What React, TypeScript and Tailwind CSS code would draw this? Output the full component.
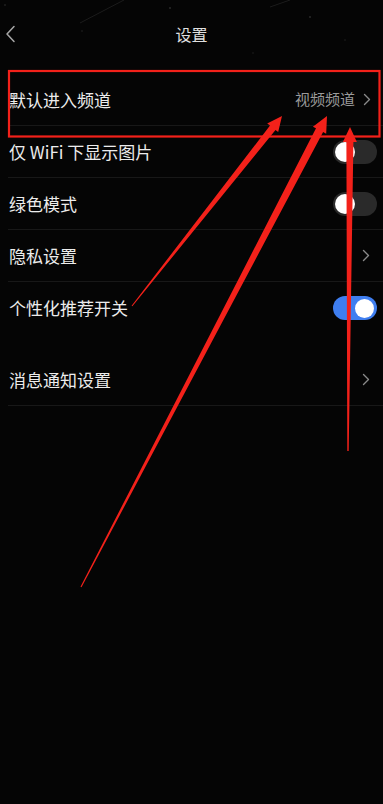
import React from "react";

type Pt = [number, number];

function arrowPoints(tail: Pt, tip: Pt, tw: number, nw: number, hl: number, hw: number): string {
  const dx = tip[0] - tail[0];
  const dy = tip[1] - tail[1];
  const len = Math.hypot(dx, dy);
  const ux = dx / len;
  const uy = dy / len;
  const nx = -uy;
  const ny = ux;
  const neck: Pt = [tip[0] - ux * hl, tip[1] - uy * hl];
  const pts: Pt[] = [
    [tail[0] + (nx * tw) / 2, tail[1] + (ny * tw) / 2],
    [neck[0] + (nx * nw) / 2, neck[1] + (ny * nw) / 2],
    [neck[0] + (nx * hw) / 2, neck[1] + (ny * hw) / 2],
    tip,
    [neck[0] - (nx * hw) / 2, neck[1] - (ny * hw) / 2],
    [neck[0] - (nx * nw) / 2, neck[1] - (ny * nw) / 2],
    [tail[0] - (nx * tw) / 2, tail[1] - (ny * tw) / 2],
  ];
  return pts.map((p) => `${p[0].toFixed(1)},${p[1].toFixed(1)}`).join(" ");
}

function Chevron() {
  return (
    <svg width="8" height="13" viewBox="0 0 8 13" className="shrink-0">
      <path d="M1.5 1.5 L6.5 6.5 L1.5 11.5" fill="none" stroke="#8a8a8a" strokeWidth="1.4" strokeLinecap="round" strokeLinejoin="round" />
    </svg>
  );
}

function Toggle({ on }: { on: boolean }) {
  return on ? (
    <div className="w-[44px] h-[24px] rounded-full bg-[#3f7ef0] flex items-center justify-end pr-[3px]">
      <div className="w-[19px] h-[19px] rounded-full bg-white" />
    </div>
  ) : (
    <div className="w-[44px] h-[24px] rounded-full bg-[#2a2a2a] flex items-center pl-[2px]">
      <div className="w-[20px] h-[20px] rounded-full bg-white" />
    </div>
  );
}

function Row({ label, children, border = true, pr = "pr-[13px]" }: { label: string; children?: React.ReactNode; border?: boolean; pr?: string }) {
  return (
    <div className={`ml-2 pl-px h-[52px] flex items-center justify-between ${pr} ${border ? "border-b border-[#181818]" : ""}`}>
      <span className="text-[17px] text-[#ececec] tracking-[0px]">{label}</span>
      {children}
    </div>
  );
}

export default function App() {
  const red = "#f3211a";
  return (
    <div
      className="relative w-[383px] h-[804px] overflow-hidden bg-[#050505]"
      style={{ fontFamily: '"Noto Sans CJK SC", "Noto Sans", sans-serif' }}
    >
      {/* header */}
      <div className="relative h-[74px] flex justify-center">
        <svg className="absolute left-0 top-0" width="383" height="74">
          <line x1="80" y1="23" x2="124" y2="0" stroke="#1c1c1c" strokeWidth="1" />
          <line x1="270" y1="7" x2="290" y2="0" stroke="#1c1c1c" strokeWidth="1" />
          <circle cx="170" cy="8" r="1" fill="#2a2a2a" />
          <circle cx="310" cy="17" r="1" fill="#2a2a2a" />
          <circle cx="82" cy="31" r="0.8" fill="#262626" />
          <circle cx="345" cy="40" r="0.8" fill="#222" />
          <circle cx="253" cy="53" r="0.8" fill="#202020" />
          <circle cx="5" cy="5" r="0.8" fill="#333" />
        </svg>
        <svg className="absolute left-[5px] top-[25px]" width="11" height="18" viewBox="0 0 11 18">
          <path d="M9 1.5 L2 9 L9 16.5" fill="none" stroke="#a8a8a8" strokeWidth="1.5" strokeLinecap="round" strokeLinejoin="round" />
        </svg>
        <span className="mt-[23px] text-[16px] leading-[22px] text-[#e0e0e0]">设置</span>
      </div>

      <Row label="默认进入频道" pr="pr-[12px]">
        <div className="flex items-center gap-[8px]">
          <span className="text-[15px] text-[#9a9a9a]">视频频道</span>
          <Chevron />
        </div>
      </Row>
      <Row label="仅 WiFi 下显示图片" pr="pr-[6px]">
        <Toggle on={false} />
      </Row>
      <Row label="绿色模式" pr="pr-[6px]">
        <Toggle on={false} />
      </Row>
      <Row label="隐私设置">
        <Chevron />
      </Row>
      <Row label="个性化推荐开关" pr="pr-[6px]" border={false}>
        <Toggle on={true} />
      </Row>
      <div className="h-[20px]" />
      <Row label="消息通知设置">
        <Chevron />
      </Row>

      {/* annotations */}
      <svg className="absolute left-0 top-0 pointer-events-none" width="383" height="804">
        <rect x="9" y="71" width="370.5" height="65.5" fill="none" stroke={red} strokeWidth="2.2" />
        <polygon points={arrowPoints([132, 306], [282, 116], 1, 7, 15, 14)} fill={red} />
        <polygon points={arrowPoints([81, 587], [327, 116], 1.2, 8, 16, 15)} fill={red} />
        <polygon points={arrowPoints([348, 451], [350, 127], 1.5, 7, 15, 14)} fill={red} />
      </svg>
    </div>
  );
}
